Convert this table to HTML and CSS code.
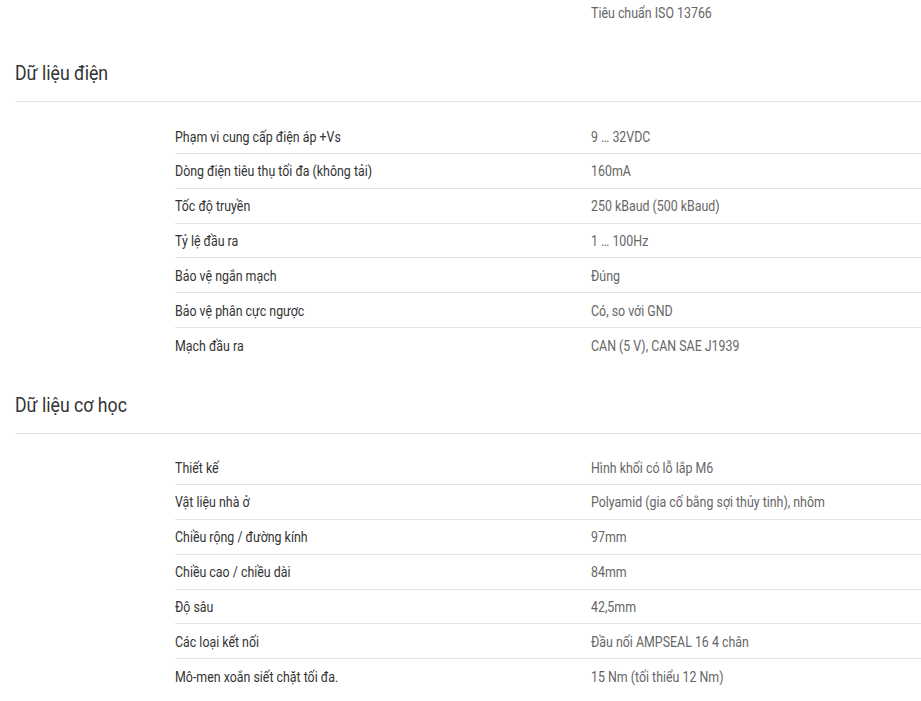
FILE: index.html
```html
<!DOCTYPE html>
<html lang="vi">
<head>
<meta charset="utf-8">
<title>Thông số kỹ thuật</title>
<link rel="stylesheet" href="styles.css">
</head>
<body>
<div class="page">
  <section class="section section-top">
    <div class="rows">
      <div class="row"><div class="label"></div><div class="value">Tiêu chuẩn ISO 13766</div></div>
    </div>
  </section>

  <section class="section">
    <h2 class="heading"><span class="heading-text">Dữ liệu điện</span></h2>
    <div class="rows">
      <div class="row"><div class="label">Phạm vi cung cấp điện áp +Vs</div><div class="value">9 … 32VDC</div></div>
      <div class="row"><div class="label">Dòng điện tiêu thụ tối đa (không tải)</div><div class="value">160mA</div></div>
      <div class="row"><div class="label">Tốc độ truyền</div><div class="value">250 kBaud (500 kBaud)</div></div>
      <div class="row"><div class="label">Tỷ lệ đầu ra</div><div class="value">1 … 100Hz</div></div>
      <div class="row"><div class="label">Bảo vệ ngắn mạch</div><div class="value">Đúng</div></div>
      <div class="row"><div class="label">Bảo vệ phân cực ngược</div><div class="value">Có, so với GND</div></div>
      <div class="row"><div class="label">Mạch đầu ra</div><div class="value">CAN (5 V), CAN SAE J1939</div></div>
    </div>
  </section>

  <section class="section">
    <h2 class="heading"><span class="heading-text">Dữ liệu cơ học</span></h2>
    <div class="rows">
      <div class="row"><div class="label">Thiết kế</div><div class="value">Hình khối có lỗ lắp M6</div></div>
      <div class="row"><div class="label">Vật liệu nhà ở</div><div class="value">Polyamid (gia cố bằng sợi thủy tinh), nhôm</div></div>
      <div class="row"><div class="label">Chiều rộng / đường kính</div><div class="value">97mm</div></div>
      <div class="row"><div class="label">Chiều cao / chiều dài</div><div class="value">84mm</div></div>
      <div class="row"><div class="label">Độ sâu</div><div class="value">42,5mm</div></div>
      <div class="row"><div class="label">Các loại kết nối</div><div class="value">Đầu nối AMPSEAL 16 4 chân</div></div>
      <div class="row"><div class="label">Mô-men xoắn siết chặt tối đa.</div><div class="value">15 Nm (tối thiểu 12 Nm)</div></div>
    </div>
  </section>
</div>
</body>
</html>
```

FILE: styles.css
```css
html, body {
  margin: 0;
  padding: 0;
  background: #ffffff;
}

body {
  font-family: Roboto, "Liberation Sans", Arial, sans-serif;
  font-size: 14px;
  color: #333333;
  overflow: hidden;
}

.page {
  padding-left: 15px;
}

.section-top {
  margin-top: -3px;
}

.section {
  display: flex;
  flex-direction: column;
}

.heading {
  margin: 28.6px 0 0 0;
  padding: 0 0 14px 0;
  font-size: 20px;
  line-height: 28px;
  font-weight: 400;
  color: #333333;
  border-bottom: 1px solid #e3e3e3;
}

.heading-text {
  display: inline-block;
  transform: scaleX(0.885);
  transform-origin: left center;
}

.rows {
  display: flex;
  flex-direction: column;
  margin-left: 160px;
}

.heading + .rows {
  margin-top: 16.6px;
}

.row {
  display: grid;
  grid-template-columns: 416px 1fr;
  padding: 8.5px 0 5.5px;
  line-height: 19.85px;
  border-bottom: 1px solid #e3e3e3;
}

.section-top .row {
  padding: 6.5px 0 7.5px;
}

.row:last-child {
  border-bottom: none;
}

.label,
.value {
  transform: scaleX(0.885);
  transform-origin: left center;
  white-space: nowrap;
}

.label {
  color: #333333;
}

.value {
  color: #666666;
}
```
